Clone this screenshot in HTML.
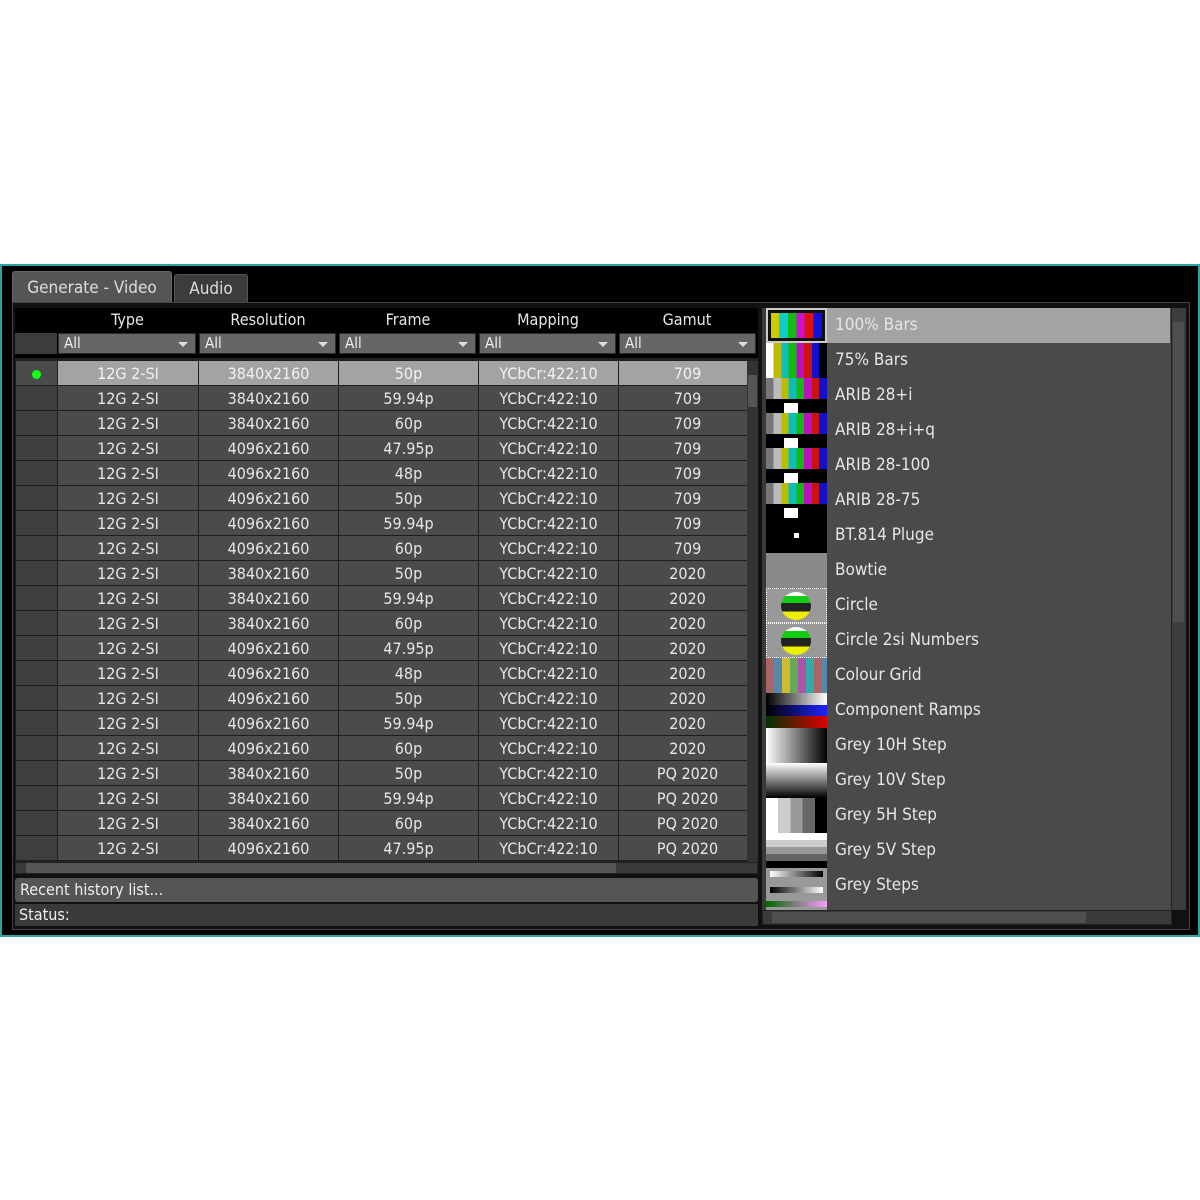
<!DOCTYPE html>
<html><head><meta charset="utf-8">
<style>
*{margin:0;padding:0;box-sizing:border-box}
body{width:1200px;height:1200px;background:#fff;position:relative;overflow:hidden;font-family:"DejaVu Sans Condensed","Liberation Sans",sans-serif;color:#e8e8e8}
.abs{position:absolute}
#frame{left:0;top:264px;width:1200px;height:673px;background:#000;border:2px solid #2aa6a0;border-right-width:2px}
.tab{position:absolute;top:7px;height:32px;border-radius:3px 3px 0 0;font-size:17px;line-height:32px;text-align:center;color:#ddd}
table{border-collapse:collapse;table-layout:fixed;position:absolute}
td{border:1px solid #1e1e1e;height:25px;font-size:16px;text-align:center;background:#4b4b4b;color:#e6e6e6;white-space:nowrap;padding:0}
td.f{background:#3e3e3e}
td.g{padding-left:9px}
tr.sel td{background:#a3a3a3;color:#f2f2f2}
tr.sel td.f{background:#4b4b4b}
.hd{position:absolute;top:308px;height:24px;font-size:16px;line-height:24px;text-align:center;color:#e8e8e8}
.flt{position:absolute;top:333px;height:21px;background:#666;border:1px solid #2a2a2a;font-size:15px;line-height:19px;padding-left:5px;color:#eee}
.flt:after{content:"";position:absolute;right:7px;top:8px;border-left:5px solid transparent;border-right:5px solid transparent;border-top:5px solid #ddd}
.it{position:absolute;left:766px;width:404px;height:35px}
.th{position:absolute;left:0;top:0;width:61px;height:35px;overflow:hidden}
.lb{position:absolute;left:69px;top:0;line-height:35px;font-size:17px;color:#e6e6e6}
.arib{background:linear-gradient(#0000 0 60%,#000 60%),linear-gradient(90deg,#777 0 12%,#bbb 12% 25%,#bb0 25% 37%,#1bb 37% 50%,#1b1 50% 62%,#b1b 62% 75%,#c11 75% 87%,#11c 87%)}
.wb{position:absolute;left:18px;top:25px;width:14px;height:10px;background:#fff}
</style></head><body>
<div id="frame" class="abs"></div>
<div class="tab" style="left:12px;top:271px;width:160px;background:#555;border:1px solid #666">Generate - Video</div>
<div class="tab" style="left:174px;top:274px;width:74px;height:29px;line-height:29px;background:#3c3c3c;border:1px solid #555">Audio</div>
<div class="abs" style="left:12px;top:302px;width:1178px;height:628px;background:#111;border:1px solid #444"></div>
<div class="abs" style="left:15px;top:308px;width:743px;height:50px;background:#000"></div>
<div class="abs" style="left:15px;top:333px;width:42px;height:21px;background:#3c3c3c"></div>
<div class="hd" style="left:57px;width:141px">Type</div>
<div class="hd" style="left:198px;width:140px">Resolution</div>
<div class="hd" style="left:338px;width:140px">Frame</div>
<div class="hd" style="left:478px;width:140px">Mapping</div>
<div class="hd" style="left:618px;width:138px">Gamut</div>
<div class="flt" style="left:58px;width:138px">All</div>
<div class="flt" style="left:199px;width:137px">All</div>
<div class="flt" style="left:339px;width:137px">All</div>
<div class="flt" style="left:479px;width:137px">All</div>
<div class="flt" style="left:619px;width:137px">All</div>
<div class="abs" style="left:15px;top:358px;width:743px;height:504px;background:#222"></div>
<table style="left:15px;top:360px;width:732px">
<colgroup><col style="width:42px"><col style="width:141px"><col style="width:140px"><col style="width:140px"><col style="width:140px"><col style="width:129px"></colgroup>
<tr class="sel"><td class="f"><span style="display:inline-block;width:9px;height:9px;border-radius:50%;background:#1f1"></span></td><td>12G 2-SI</td><td>3840x2160</td><td>50p</td><td>YCbCr:422:10</td><td class="g">709</td></tr>
<tr><td class="f"></td><td>12G 2-SI</td><td>3840x2160</td><td>59.94p</td><td>YCbCr:422:10</td><td class="g">709</td></tr>
<tr><td class="f"></td><td>12G 2-SI</td><td>3840x2160</td><td>60p</td><td>YCbCr:422:10</td><td class="g">709</td></tr>
<tr><td class="f"></td><td>12G 2-SI</td><td>4096x2160</td><td>47.95p</td><td>YCbCr:422:10</td><td class="g">709</td></tr>
<tr><td class="f"></td><td>12G 2-SI</td><td>4096x2160</td><td>48p</td><td>YCbCr:422:10</td><td class="g">709</td></tr>
<tr><td class="f"></td><td>12G 2-SI</td><td>4096x2160</td><td>50p</td><td>YCbCr:422:10</td><td class="g">709</td></tr>
<tr><td class="f"></td><td>12G 2-SI</td><td>4096x2160</td><td>59.94p</td><td>YCbCr:422:10</td><td class="g">709</td></tr>
<tr><td class="f"></td><td>12G 2-SI</td><td>4096x2160</td><td>60p</td><td>YCbCr:422:10</td><td class="g">709</td></tr>
<tr><td class="f"></td><td>12G 2-SI</td><td>3840x2160</td><td>50p</td><td>YCbCr:422:10</td><td class="g">2020</td></tr>
<tr><td class="f"></td><td>12G 2-SI</td><td>3840x2160</td><td>59.94p</td><td>YCbCr:422:10</td><td class="g">2020</td></tr>
<tr><td class="f"></td><td>12G 2-SI</td><td>3840x2160</td><td>60p</td><td>YCbCr:422:10</td><td class="g">2020</td></tr>
<tr><td class="f"></td><td>12G 2-SI</td><td>4096x2160</td><td>47.95p</td><td>YCbCr:422:10</td><td class="g">2020</td></tr>
<tr><td class="f"></td><td>12G 2-SI</td><td>4096x2160</td><td>48p</td><td>YCbCr:422:10</td><td class="g">2020</td></tr>
<tr><td class="f"></td><td>12G 2-SI</td><td>4096x2160</td><td>50p</td><td>YCbCr:422:10</td><td class="g">2020</td></tr>
<tr><td class="f"></td><td>12G 2-SI</td><td>4096x2160</td><td>59.94p</td><td>YCbCr:422:10</td><td class="g">2020</td></tr>
<tr><td class="f"></td><td>12G 2-SI</td><td>4096x2160</td><td>60p</td><td>YCbCr:422:10</td><td class="g">2020</td></tr>
<tr><td class="f"></td><td>12G 2-SI</td><td>3840x2160</td><td>50p</td><td>YCbCr:422:10</td><td class="g">PQ 2020</td></tr>
<tr><td class="f"></td><td>12G 2-SI</td><td>3840x2160</td><td>59.94p</td><td>YCbCr:422:10</td><td class="g">PQ 2020</td></tr>
<tr><td class="f"></td><td>12G 2-SI</td><td>3840x2160</td><td>60p</td><td>YCbCr:422:10</td><td class="g">PQ 2020</td></tr>
<tr><td class="f"></td><td>12G 2-SI</td><td>4096x2160</td><td>47.95p</td><td>YCbCr:422:10</td><td class="g">PQ 2020</td></tr>
</table>
<div class="abs" style="left:747px;top:361px;width:11px;height:501px;background:#333"></div>
<div class="abs" style="left:748px;top:375px;width:9px;height:32px;background:#555"></div>
<div class="abs" style="left:15px;top:862px;width:743px;height:12px;background:#3a3a3a;border:1px solid #222"></div>
<div class="abs" style="left:26px;top:863px;width:590px;height:10px;background:#555"></div>
<div class="abs" style="left:15px;top:878px;width:743px;height:24px;background:#555;border-radius:3px;font-size:16px;line-height:24px;padding-left:5px;color:#eee">Recent history list...</div>
<div class="abs" style="left:15px;top:904px;width:743px;height:22px;background:#3a3a3a;font-size:16px;line-height:22px;padding-left:4px;color:#eee">Status:</div>
<div class="abs" style="left:762px;top:308px;width:424px;height:602px;background:#4a4a4a"></div>
<div class="abs" style="left:762px;top:308px;width:4px;height:602px;background:#3a3a3a"></div>
<div class="abs" style="left:1171px;top:308px;width:15px;height:602px;background:#3d3d3d;border-left:1px solid #222"></div>
<div class="abs" style="left:1173px;top:322px;width:11px;height:300px;background:#4f4f4f"></div>
<div class="abs" style="left:762px;top:910px;width:410px;height:15px;background:#3a3a3a;border:1px solid #222"></div>
<div class="abs" style="left:772px;top:912px;width:314px;height:11px;background:#4f4f4f"></div>

<div class="it" style="top:308px;background:#a3a3a3"><div class="th" style="background:#ccc;padding:2px"><div style="width:100%;height:100%;border:3px solid #111;background:linear-gradient(90deg,#cc0 0 16%,#1cc 16% 33%,#1b1 33% 50%,#c1c 50% 66%,#d11 66% 83%,#11d 83%)"></div></div><div class="lb">100% Bars</div></div>
<div class="it" style="top:343px"><div class="th" style="background:linear-gradient(90deg,#fff 0 12%,#bb0 12% 25%,#1bb 25% 37%,#1b1 37% 50%,#b1b 50% 62%,#c11 62% 75%,#11c 75% 87%,#000 87%)"></div><div class="lb">75% Bars</div></div>
<div class="it" style="top:378px"><div class="th arib"></div><div class="wb"></div><div class="lb">ARIB 28+i</div></div>
<div class="it" style="top:413px"><div class="th arib"></div><div class="wb"></div><div class="lb">ARIB 28+i+q</div></div>
<div class="it" style="top:448px"><div class="th arib"></div><div class="wb"></div><div class="lb">ARIB 28-100</div></div>
<div class="it" style="top:483px"><div class="th arib"></div><div class="wb"></div><div class="lb">ARIB 28-75</div></div>
<div class="it" style="top:518px"><div class="th" style="background:#000"></div><div class="abs" style="left:28px;top:15px;width:5px;height:5px;background:#fff"></div><div class="lb">BT.814 Pluge</div></div>
<div class="it" style="top:553px"><div class="th" style="background:#8a8a8a"></div><div class="lb">Bowtie</div></div>
<div class="it" style="top:588px"><div class="th" style="background:#999;border:1px dotted #fff"></div><div class="abs" style="left:15px;top:4px;width:30px;height:28px;border-radius:50%;background:linear-gradient(#fff 0 15%,#1c1 15% 40%,#222 40% 70%,#ee0 70%)"></div><div class="lb">Circle</div></div>
<div class="it" style="top:623px"><div class="th" style="background:#999;border:1px dotted #fff"></div><div class="abs" style="left:15px;top:4px;width:30px;height:28px;border-radius:50%;background:linear-gradient(#fff 0 15%,#1c1 15% 40%,#222 40% 70%,#ee0 70%)"></div><div class="lb">Circle 2si Numbers</div></div>
<div class="it" style="top:658px"><div class="th" style="background:repeating-linear-gradient(90deg,#a66 0 8px,#58a 8px 16px,#cb3 16px 24px,#6a5 24px 32px,#a5a 32px 40px,#3aa 40px 48px),#222"></div><div class="lb">Colour Grid</div></div>
<div class="it" style="top:693px"><div class="th"><div style="height:12px;background:linear-gradient(90deg,#000,#fff)"></div><div style="height:11px;background:linear-gradient(90deg,#000,#22f)"></div><div style="height:12px;background:linear-gradient(90deg,#030,#d00)"></div></div><div class="lb">Component Ramps</div></div>
<div class="it" style="top:728px"><div class="th" style="background:linear-gradient(90deg,#fff,#000)"></div><div class="lb">Grey 10H Step</div></div>
<div class="it" style="top:763px"><div class="th" style="background:linear-gradient(#fff,#000)"></div><div class="lb">Grey 10V Step</div></div>
<div class="it" style="top:798px"><div class="th" style="background:linear-gradient(90deg,#fff 0 20%,#ccc 20% 40%,#999 40% 60%,#666 60% 80%,#000 80%)"></div><div class="lb">Grey 5H Step</div></div>
<div class="it" style="top:833px"><div class="th" style="background:linear-gradient(#fff 0 20%,#ccc 20% 40%,#999 40% 60%,#666 60% 80%,#000 80%)"></div><div class="lb">Grey 5V Step</div></div>
<div class="it" style="top:868px;height:42px;overflow:hidden"><div class="th" style="background:#999;height:42px"><div style="margin:3px 4px;height:6px;background:linear-gradient(90deg,#fff,#000)"></div><div style="margin:10px 4px 0;height:6px;background:linear-gradient(90deg,#000,#fff)"></div><div style="margin-top:8px;height:6px;background:linear-gradient(90deg,#060,#f9f)"></div></div><div class="lb">Grey Steps</div></div>
</body></html>
